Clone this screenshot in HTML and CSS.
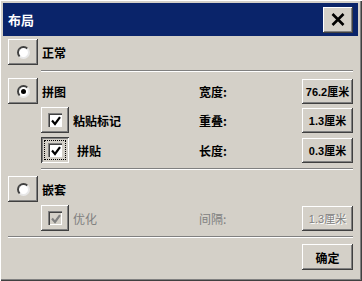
FILE: index.html
```html
<!DOCTYPE html>
<html lang="zh">

<head>
    <meta charset="UTF-8">
    <title>布局</title>
    <link rel="stylesheet" href="styles.css">
</head>

<body>
    <div class="window">

        <!-- Title bar -->
        <div class="titlebar">
            <span class="title">布局</span>
            <span class="btn close" title="关闭">
                <svg width="14" height="13" viewBox="0 0 14 13">
                    <path d="M1.5 1 L12.5 12 M12.5 1 L1.5 12" stroke="#000" stroke-width="2.6" />
                </svg>
            </span>
        </div>

        <div class="content">

            <!-- 正常 -->
            <div class="row">
                <div class="lead">
                    <span class="btn opt"><span class="radio"></span></span>
                    <span class="label">正常</span>
                </div>
            </div>

            <div class="sep indent"></div>

            <!-- 拼图 -->
            <div class="row">
                <div class="lead">
                    <span class="btn opt"><span class="radio on"></span></span>
                    <span class="label">拼图</span>
                </div>
                <span class="field">宽度:</span>
                <span class="btn value">76.2厘米</span>
            </div>
            <div class="row sub">
                <div class="lead">
                    <span class="btn opt"><span class="check">
                        <svg width="10" height="10" viewBox="0 0 10 10"><path d="M1 4.5 L4 8 L9 1.2" /></svg>
                    </span></span>
                    <span class="label">粘贴标记</span>
                </div>
                <span class="field">重叠:</span>
                <span class="btn value">1.3厘米</span>
            </div>
            <div class="row sub">
                <div class="lead">
                    <span class="btn opt pressed"><span class="check">
                        <svg width="10" height="10" viewBox="0 0 10 10"><path d="M1 4.5 L4 8 L9 1.2" /></svg>
                    </span></span>
                    <span class="label wide">拼贴</span>
                </div>
                <span class="field">长度:</span>
                <span class="btn value">0.3厘米</span>
            </div>

            <div class="sep indent"></div>

            <!-- 嵌套 -->
            <div class="row">
                <div class="lead">
                    <span class="btn opt"><span class="radio"></span></span>
                    <span class="label">嵌套</span>
                </div>
            </div>
            <div class="row sub off">
                <div class="lead">
                    <span class="btn opt"><span class="check">
                        <svg width="10" height="10" viewBox="0 0 10 10"><path d="M1 4.5 L4 8 L9 1.2" /></svg>
                    </span></span>
                    <span class="label">优化</span>
                </div>
                <span class="field">间隔:</span>
                <span class="btn value">1.3厘米</span>
            </div>

            <div class="sep"></div>

            <div class="footer">
                <span class="btn value ok">确定</span>
            </div>

        </div>
    </div>
</body>

</html>
```

FILE: styles.css
```css
* {
    box-sizing: border-box;
    font-family: "Noto Sans CJK SC", "Liberation Sans", sans-serif;
}

body {
    margin: 0;
    background-color: #d4d0c8;
}

.window {
    width: 362px;
    height: 281px;
    padding: 3px 4px 0 3px;
    background-color: #d4d0c8;
    box-shadow: inset 1px 1px #ffffff, inset -1px -1px #404040, inset -2px -2px #808080;
}

/* Title bar */
.titlebar {
    height: 33px;
    background-color: #0a246a;
    display: flex;
    align-items: center;
    justify-content: space-between;
    padding: 0 5px;
}

.title {
    color: #ffffff;
    font-size: 13px;
    font-weight: bold;
}

/* 3D buttons */
.btn {
    display: flex;
    align-items: center;
    justify-content: center;
    background-color: #d4d0c8;
    box-shadow: inset -1px -1px #404040, inset 1px 1px #ffffff, inset -2px -2px #808080;
}

.close {
    width: 30px;
    height: 26px;
}

.content {
    padding: 3px 5px 0 5px;
}

.row {
    display: flex;
    align-items: center;
    height: 26px;
}

.row.sub {
    margin-top: 3px;
}

.row.sub + .row.sub {
    margin-top: 4px;
}

.lead {
    display: flex;
    align-items: center;
    width: 191px;
}

.sub .lead {
    padding-left: 33px;
}

.opt {
    width: 30px;
    height: 26px;
}

.sub .opt {
    width: 28px;
}

.label {
    margin-left: 4px;
    font-size: 12px;
    font-weight: bold;
    color: #000000;
}

.label.wide {
    margin-left: 8px;
}

.field {
    font-size: 12px;
    font-weight: bold;
    color: #000000;
}

.value {
    margin-left: auto;
    width: 51px;
    height: 25px;
    font-family: "Liberation Sans", "Noto Sans CJK SC", sans-serif;
    font-size: 11px;
    font-weight: bold;
    color: #000000;
    white-space: nowrap;
}

/* radio & check marks */
.radio {
    width: 13px;
    height: 13px;
    border-radius: 50%;
    background-color: #ffffff;
    border: 2px solid;
    border-color: #404040 #e8e8e8 #e8e8e8 #404040;
    display: flex;
    align-items: center;
    justify-content: center;
}

.radio.on::after {
    content: "";
    width: 5px;
    height: 5px;
    border-radius: 50%;
    background-color: #000000;
}

.check {
    width: 14px;
    height: 14px;
    display: flex;
    align-items: center;
    justify-content: center;
    background-color: #ffffff;
    box-shadow: inset 1px 1px #808080, inset 2px 2px #404040, inset -1px -1px #ffffff;
    padding: 2px 0 0 2px;
}

.check path {
    fill: none;
    stroke: #000000;
    stroke-width: 2.2;
}

.pressed {
    position: relative;
    box-shadow: inset 1px 1px #404040, inset -1px -1px #ffffff, inset 2px 2px #808080;
}

.pressed::after {
    content: "";
    position: absolute;
    inset: 3px;
    border: 1px dotted #000000;
}

/* disabled row */
.off .label,
.off .field {
    font-weight: normal;
    color: #808080;
}

.off .value {
    font-weight: normal;
    color: #808080;
    text-shadow: 1px 1px #ffffff;
}

.off .check {
    background-color: #d4d0c8;
}

.off .check path {
    stroke: #808080;
}

.sep {
    height: 2px;
    margin: 5px 0 6px;
    border-top: 1px solid #808080;
    border-bottom: 1px solid #ffffff;
}

.sep.indent {
    margin-left: 33px;
}

.footer {
    display: flex;
    justify-content: flex-end;
}

.ok {
    height: 26px;
    font-family: "Noto Sans CJK SC", sans-serif;
    font-size: 12px;
}
```
